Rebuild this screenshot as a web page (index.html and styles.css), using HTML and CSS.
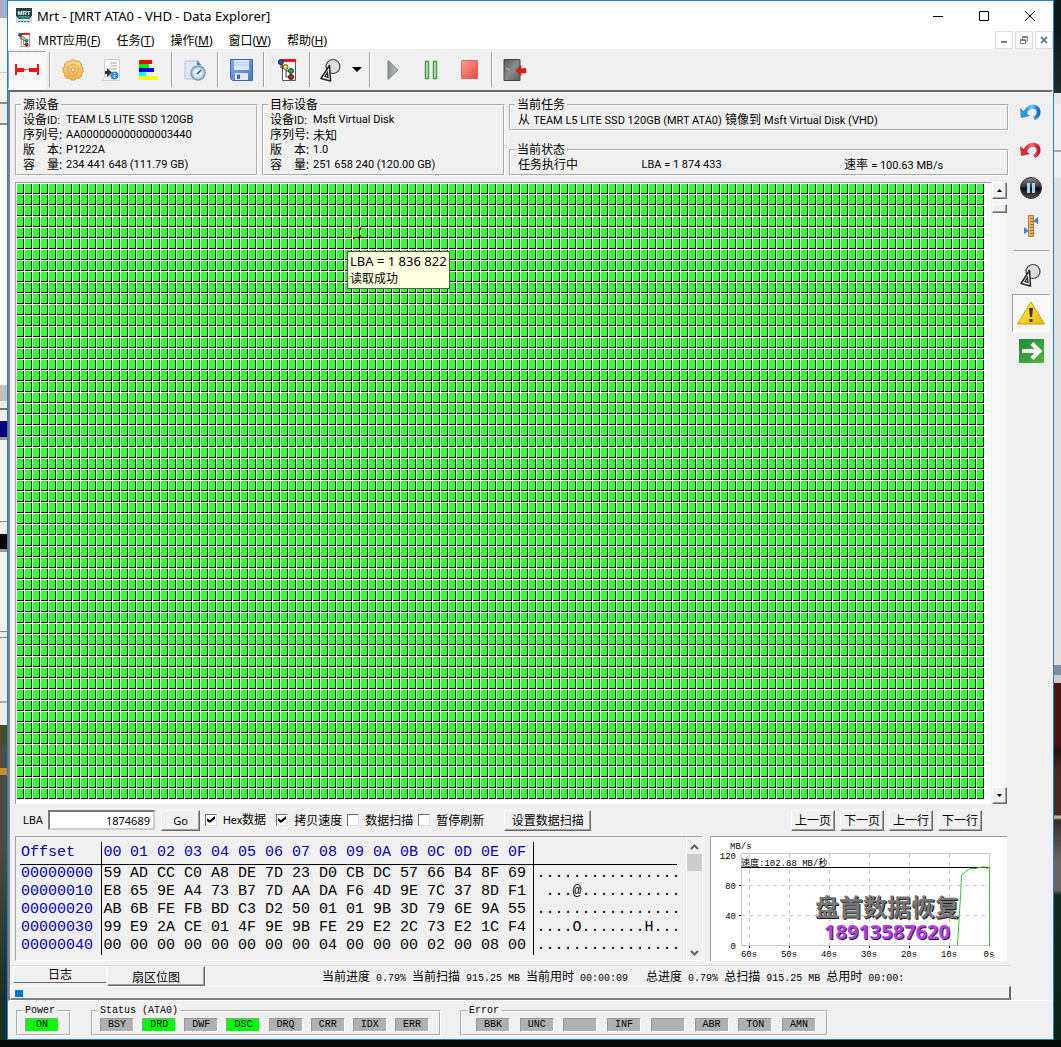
FILE: index.html
```html
<!DOCTYPE html>
<html lang="zh-CN">
<head>
<meta charset="utf-8">
<title>Mrt - [MRT ATA0 - VHD - Data Explorer]</title>
<link rel="stylesheet" href="styles.css">
</head>
<body>
<svg class="defs" width="0" height="0" aria-hidden="true">
  <defs>
    <linearGradient id="gGold" x1="0" y1="0" x2="0" y2="1"><stop offset="0" stop-color="#fbdc8c"/><stop offset="1" stop-color="#eeb04a"/></linearGradient>
    <linearGradient id="gBlue" x1="0" y1="0" x2="1" y2="1"><stop offset="0" stop-color="#86abe8"/><stop offset="1" stop-color="#4a78c8"/></linearGradient>
    <linearGradient id="gRed" x1="0" y1="0" x2="1" y2="1"><stop offset="0" stop-color="#ffa090"/><stop offset="1" stop-color="#e54440"/></linearGradient>
    <linearGradient id="gGrey" x1="0" y1="0" x2="1" y2="0"><stop offset="0" stop-color="#8b918b"/><stop offset="1" stop-color="#b8beb8"/></linearGradient>
    <linearGradient id="gDoor" x1="0" y1="0" x2="1" y2="1"><stop offset="0" stop-color="#555"/><stop offset=".5" stop-color="#8c8c8c"/><stop offset="1" stop-color="#5c5c5c"/></linearGradient>
    <linearGradient id="gUndo" x1="0" y1="0" x2="1" y2="0"><stop offset="0" stop-color="#2b9ae0"/><stop offset=".5" stop-color="#6cc4f4"/><stop offset="1" stop-color="#1670be"/></linearGradient>
    <linearGradient id="gRedo" x1="0" y1="0" x2="1" y2="0"><stop offset="0" stop-color="#d8263a"/><stop offset=".5" stop-color="#f06878"/><stop offset="1" stop-color="#c01c30"/></linearGradient>
    <linearGradient id="gBall" x1="0" y1="0" x2="0" y2="1"><stop offset="0" stop-color="#888"/><stop offset=".45" stop-color="#333"/><stop offset=".5" stop-color="#0a0a0a"/><stop offset="1" stop-color="#555"/></linearGradient>
    <linearGradient id="gWarn" x1="0" y1="0" x2="1" y2="1"><stop offset="0" stop-color="#fff04a"/><stop offset="1" stop-color="#eeb400"/></linearGradient>
    <linearGradient id="gGreen" x1="0" y1="0" x2="1" y2="1"><stop offset="0" stop-color="#1f8a3c"/><stop offset="1" stop-color="#4fb83a"/></linearGradient>
    <symbol id="shapes" viewBox="0 0 24 24">
      <circle cx="14" cy="8.500" r="7" fill="#dcdcdc" stroke="#444" stroke-width="1.200"/>
      <path d="M10.500 7.500 11.500 23 2 20.500Z" fill="#fff" stroke="#222" stroke-width="1.500" stroke-linejoin="round"/>
      <path d="M8.500 14.500 9 19.500 6 18.500Z" fill="#fff" stroke="#222" stroke-width="1.300"/>
    </symbol>
    <symbol id="tree" viewBox="0 0 18 22">
      <path d="M4.500.5H17.500V21.500H4.500Z" fill="#fff" stroke="#555"/>
      <path d="M5 0H18V3H5Z" fill="#e01818"/>
      <path d="M3 4V9H7M8 9V12H13M8 12V18H13" fill="none" stroke="#333"/>
      <circle cx="2.800" cy="3" r="2.500" fill="#2258b8" stroke="#123"/>
      <circle cx="7.500" cy="8" r="2.500" fill="#e8d838" stroke="#554"/>
      <circle cx="13" cy="12" r="2.500" fill="#28a848" stroke="#143"/>
      <circle cx="13" cy="18" r="2.500" fill="#c82020" stroke="#411"/>
    </symbol>
  </defs>
</svg>

<div class="desktop">
<div class="backdrop backdrop-left"></div>
<main class="window">
  <header class="titlebar">
    <svg width="16" height="16" viewBox="0 0 16 16"><path d="M0 0H16V8L13 11H3L0 8Z" fill="#21403f"/><path d="M0 9 3 11.500H13L16 9V15H0Z" fill="#c8dcd8"/><path d="M2 8 4 10.500H12L14 8Z" fill="#2f9a86"/><text x="8" y="6.500" text-anchor="middle" class="logo-text">MRT</text><path d="M2 13.500H14" stroke="#667" stroke-dasharray="2 1"/></svg>
    <h1>Mrt - [MRT ATA0 - VHD - Data Explorer]</h1>
    <div class="caption-buttons">
      <button aria-label="最小化"><svg width="12" height="12"><path d="M1 6.500H11" stroke="#000"/></svg></button>
      <button aria-label="最大化"><svg width="12" height="12"><path d="M1.500 1.500H10.500V10.500H1.500Z" fill="none" stroke="#000"/></svg></button>
      <button aria-label="关闭"><svg width="12" height="12"><path d="M1 1 11 11M11 1 1 11" stroke="#000"/></svg></button>
    </div>
  </header>

  <nav class="menubar">
    <svg width="12" height="14"><use href="#tree"/></svg>
    <a href="#">MRT应用(<u>F</u>)</a>
    <a href="#">任务(<u>T</u>)</a>
    <a href="#">操作(<u>M</u>)</a>
    <a href="#">窗口(<u>W</u>)</a>
    <a href="#">帮助(<u>H</u>)</a>
    <div class="mdi-buttons">
      <button aria-label="最小化子窗口"><svg width="8" height="8"><path d="M1 6H7" stroke="#6d7f92" stroke-width="2"/></svg></button>
      <button aria-label="还原子窗口"><svg width="8" height="8"><path d="M2.500 3V.5H7.500V5H6M2 1.500H8M.5 3.500H5.500V7.500H.5ZM0 4.500H6" fill="none" stroke="#6d7f92"/></svg></button>
      <button aria-label="关闭子窗口"><svg width="8" height="8"><path d="M1 1 7 7M7 1 1 7" stroke="#6d7f92" stroke-width="2"/></svg></button>
    </div>
  </nav>

  <div class="toolbar" role="toolbar">
    <button class="tool pressed" aria-label="连接"><svg width="24" height="12"><path d="M0 0H2V4L12 5.500 22 4V0H24V11H22V7L12 6 2 8V11H0ZM2 4H9V8H2ZM14 4H22V8H14Z" fill="#f01414"/></svg></button>
    <i class="sep"></i>
    <button class="tool" aria-label="设置"><svg width="22" height="22" viewBox="0 0 22 22"><path d="M9 1H13L14 3 17 2 19.500 5 19 7.500 21 9V13L19 14.500 19.500 17 17 19.500 14 19 13 21H9L8 19 5 19.500 2.500 17 3 14.500 1 13V9L3 7.500 2.500 5 5 2.500 8 3Z" fill="url(#gGold)" stroke="#d89a38"/><circle cx="11" cy="11" r="5.500" fill="none" stroke="#e0a648"/><circle cx="11" cy="11" r="2" fill="#fff" stroke="#c88a30"/></svg></button>
    <button class="tool" aria-label="任务信息"><svg width="20" height="22" viewBox="0 0 20 22"><path d="M3.500.5H18.500V21.500H1L3.500 18Z" fill="#fafafa" stroke="#d0d0d0"/><path d="M9 4H16M10 7H16M8 10H16M6 17H11" stroke="#aaa"/><path d="M4 12H6V9L11 13.500 6 18V15H4Z" fill="#333"/><circle cx="13.500" cy="16.500" r="4" fill="#2b8ae0"/><path d="M13.500 14V15M13.500 16V19" stroke="#fff" stroke-width="1.500"/></svg></button>
    <button class="tool" aria-label="颜色图例"><svg width="20" height="20" viewBox="0 0 20 20"><path d="M0 0H13V4H0Z" fill="#f00"/><path d="M0 4H10V8H0Z" fill="#0e0"/><path d="M0 8H15V12H0Z" fill="#00e"/><path d="M0 12H7V16H0Z" fill="#0ff"/><path d="M0 16H19V20H0Z" fill="#ff0"/></svg></button>
    <i class="sep"></i>
    <button class="tool" aria-label="定时"><svg width="22" height="22" viewBox="0 0 22 22"><path d="M1 2H13L17 6V20H1Z" fill="#dfe7f2" stroke="#b4c4dc"/><path d="M13 1 17 6H13Z" fill="#3c7cc0"/><circle cx="14" cy="14" r="7" fill="#a8d0ea" stroke="#8499ac" stroke-width="1.500"/><circle cx="14" cy="14" r="4.500" fill="#e8f6fc"/><path d="M13 15 17 11" stroke="#345" stroke-width="1.500"/></svg></button>
    <i class="sep"></i>
    <button class="tool" aria-label="保存"><svg width="23" height="22" viewBox="0 0 23 22"><path d="M.5.5H22.500V21.500H2.500L.5 19.500Z" fill="url(#gBlue)" stroke="#3c64b4"/><path d="M4 1H19V11H4Z" fill="#dce8fa"/><path d="M4 3.500H19M4 6H19" stroke="#b4ccee"/><path d="M5 14H18V21H5Z" fill="#e4e8f0"/><path d="M7 15.500H10V20H7Z" fill="#3c64b4"/></svg></button>
    <i class="sep"></i>
    <button class="tool" aria-label="任务树"><svg width="18" height="22"><use href="#tree"/></svg></button>
    <i class="sep"></i>
    <button class="tool shape" aria-label="图形"><svg width="24" height="24"><use href="#shapes"/></svg></button>
    <button class="tool drop" aria-label="更多"><svg width="10" height="5"><path d="M0 0H10L5 5Z"/></svg></button>
    <i class="sep"></i>
    <button class="tool" aria-label="开始"><svg width="12" height="22"><path d="M1 1.500 11 11 1 20.500Z" fill="url(#gGrey)" stroke="#7c837c"/></svg></button>
    <button class="tool" aria-label="暂停"><svg width="14" height="20"><path d="M1.500 1.500H4.500V18.500H1.500ZM9.500 1.500H12.500V18.500H9.500Z" fill="#cdeec4" stroke="#4a9c44" stroke-width="1.500"/></svg></button>
    <button class="tool" aria-label="停止"><svg width="17" height="19"><path d="M.5.5H16.500V18.500H.5Z" fill="url(#gRed)" stroke="#d86858"/></svg></button>
    <i class="sep"></i>
    <button class="tool" aria-label="退出"><svg width="24" height="22" viewBox="0 0 24 22"><path d="M1 .5H17V21.500H1Z" fill="url(#gDoor)" stroke="#444"/><path d="M3 9 6 11" stroke="#ccc"/><path d="M13 11.500 18 6.500V9.500H23V14H18V16.500Z" fill="#e01818" stroke="#b01010" stroke-width=".5"/></svg></button>
  </div>

  <div class="mdi">
    <div class="workspace">
      <section class="info">
        <fieldset class="device">
          <legend>源设备</legend>
          <dl>
            <div><dt>设备<span class="lat">ID:</span></dt><dd>TEAM L5 LITE SSD 120GB</dd></div>
            <div><dt>序列号:</dt><dd>AA000000000000003440</dd></div>
            <div><dt>版　本:</dt><dd>P1222A</dd></div>
            <div><dt>容　量:</dt><dd>234 441 648 (111.79 GB)</dd></div>
          </dl>
        </fieldset>
        <fieldset class="device">
          <legend>目标设备</legend>
          <dl>
            <div><dt>设备<span class="lat">ID:</span></dt><dd>Msft Virtual Disk</dd></div>
            <div><dt>序列号:</dt><dd class="han">未知</dd></div>
            <div><dt>版　本:</dt><dd>1.0</dd></div>
            <div><dt>容　量:</dt><dd>251 658 240 (120.00 GB)</dd></div>
          </dl>
        </fieldset>
        <div class="task">
          <fieldset>
            <legend>当前任务</legend>
            <p>从 <span class="lat">TEAM L5 LITE SSD 120GB (MRT ATA0)</span> 镜像到 <span class="lat">Msft Virtual Disk (VHD)</span></p>
          </fieldset>
          <fieldset>
            <legend>当前状态</legend>
            <p class="state"><span>任务执行中</span><span class="lat">LBA = 1 874 433</span><span>速率 <span class="lat">= 100.63 MB/s</span></span></p>
          </fieldset>
        </div>
      </section>

      <section class="map-row">
        <div class="map">
          <div class="cells"></div>
          <svg class="cursor" width="11" height="13" shape-rendering="crispEdges"><path d="M2 .5H4M7 .5H9M2 12.500H4M7 12.500H9M.5 1V4M9.500 1V4M.5 9V12M9.500 9V12" stroke="#f00"/></svg>
          <div class="tip"><span>LBA = 1 836 822</span><br>读取成功</div>
        </div>
        <div class="scroll">
          <button class="bevel" aria-label="向上"><svg width="5" height="3"><path d="M0 3H5L2.500 0Z"/></svg></button>
          <i class="bevel thumb"></i>
          <button class="bevel end" aria-label="向下"><svg width="5" height="3"><path d="M0 0H5L2.500 3Z"/></svg></button>
        </div>
      </section>

      <section class="controls">
        <label class="lat" for="lba">LBA</label>
        <input id="lba" class="lba" type="text" value="1874689">
        <button class="bevel go">Go</button>
        <label class="check"><input type="checkbox" checked><span><span class="lat">Hex</span>数据</span></label>
        <label class="check"><input type="checkbox" checked><span>拷贝速度</span></label>
        <label class="check"><input type="checkbox"><span>数据扫描</span></label>
        <label class="check"><input type="checkbox"><span>暂停刷新</span></label>
        <button class="bevel setup">设置数据扫描</button>
        <div class="pager">
          <button class="bevel">上一页</button>
          <button class="bevel">下一页</button>
          <button class="bevel">上一行</button>
          <button class="bevel">下一行</button>
        </div>
      </section>

      <section class="lower">
        <div class="hex">
          <table>
            <colgroup><col class="c-off"><col span="16" class="c-byte"><col class="c-text"></colgroup>
            <thead><tr><th>Offset</th><th>00</th><th>01</th><th>02</th><th>03</th><th>04</th><th>05</th><th>06</th><th>07</th><th>08</th><th>09</th><th>0A</th><th>0B</th><th>0C</th><th>0D</th><th>0E</th><th>0F</th><th></th></tr></thead>
            <tbody>
              <tr><th>00000000</th><td>59</td><td>AD</td><td>CC</td><td>C0</td><td>A8</td><td>DE</td><td>7D</td><td>23</td><td>D0</td><td>CB</td><td>DC</td><td>57</td><td>66</td><td>B4</td><td>8F</td><td>69</td><td>................</td></tr>
              <tr><th>00000010</th><td>E8</td><td>65</td><td>9E</td><td>A4</td><td>73</td><td>B7</td><td>7D</td><td>AA</td><td>DA</td><td>F6</td><td>4D</td><td>9E</td><td>7C</td><td>37</td><td>8D</td><td>F1</td><td> ...@...........</td></tr>
              <tr><th>00000020</th><td>AB</td><td>6B</td><td>FE</td><td>FB</td><td>BD</td><td>C3</td><td>D2</td><td>50</td><td>01</td><td>01</td><td>9B</td><td>3D</td><td>79</td><td>6E</td><td>9A</td><td>55</td><td>................</td></tr>
              <tr><th>00000030</th><td>99</td><td>E9</td><td>2A</td><td>CE</td><td>01</td><td>4F</td><td>9E</td><td>9B</td><td>FE</td><td>29</td><td>E2</td><td>2C</td><td>73</td><td>E2</td><td>1C</td><td>F4</td><td>....O.......H...</td></tr>
              <tr><th>00000040</th><td>00</td><td>00</td><td>00</td><td>00</td><td>00</td><td>00</td><td>00</td><td>00</td><td>04</td><td>00</td><td>00</td><td>00</td><td>02</td><td>00</td><td>08</td><td>00</td><td>................</td></tr>
            </tbody>
          </table>
          <div class="flat-scroll">
            <svg width="9" height="6"><path d="M1 5 4.500 1.500 8 5" fill="none" stroke="#606060" stroke-width="2"/></svg>
            <i></i>
            <svg class="end" width="9" height="6"><path d="M1 1 4.500 4.500 8 1" fill="none" stroke="#606060" stroke-width="2"/></svg>
          </div>
        </div>
        <div class="chart">
          <svg width="296" height="124" viewBox="0 0 296 124">
            <path d="M38.500 17V109M78.500 17V109M118.500 17V109M158.500 17V109M198.500 17V109M238.500 17V109M30 48.500H278M30 78.500H278" stroke="#c8c8c8" stroke-dasharray="4 4"/>
            <path d="M30.500 16.500H278.500V108.500H30.500Z" fill="none" stroke="#c8c8c8"/>
            <path d="M28 48.500H30M28 78.500H30M38.500 109V111M78.500 109V111M118.500 109V111M158.500 109V111M198.500 109V111M238.500 109V111" stroke="#000"/>
            <path d="M30 30.500H278" stroke="#000"/>
            <path d="M246.500 108 248.500 75 249.500 60 250.500 38 253 36 259 31.500H264L271 30H274L276 31.500 278.500 30V109" fill="none" stroke="#30c830"/>
            <g class="axis">
              <text x="19" y="12">MB/s</text>
              <text x="25" y="22" text-anchor="end">120</text><text x="25" y="52" text-anchor="end">80</text><text x="25" y="82" text-anchor="end">40</text><text x="25" y="112" text-anchor="end">0</text>
              <text x="38" y="120" text-anchor="middle">60s</text><text x="78" y="120" text-anchor="middle">50s</text><text x="118" y="120" text-anchor="middle">40s</text><text x="158" y="120" text-anchor="middle">30s</text><text x="198" y="120" text-anchor="middle">20s</text><text x="238" y="120" text-anchor="middle">10s</text><text x="278" y="120" text-anchor="middle">0s</text>
              <text x="30" y="29">速度:102.88 MB/秒</text>
            </g>
          </svg>
          <div class="watermark"><span>盘首数据恢复</span><strong>18913587620</strong></div>
        </div>
      </section>

      <section class="tabs">
        <button class="tab">日志</button>
        <button class="tab active">扇区位图</button>
        <p class="progress-text">当前进度<span> 0.79% </span>当前扫描<span> 915.25 MB </span>当前用时<span> 00:00:09</span></p>
        <p class="progress-text">总进度<span> 0.79% </span>总扫描<span> 915.25 MB </span>总用时<span> 00:00:</span></p>
      </section>
      <div class="bar" role="progressbar" aria-valuenow="1"><i style="width:0.79%"></i></div>
    </div>

    <aside class="side">
      <button class="tool" aria-label="撤销"><svg width="22" height="18" viewBox="0 0 22 18"><path d="M5 10C8 3 17 1 18.500 8 19 12 17 14 14 15.500" fill="none" stroke="url(#gUndo)" stroke-width="4"/><path d="M0 5 1 15 10 13Z" fill="#2b94dc"/></svg></button>
      <button class="tool" aria-label="重做"><svg width="22" height="18" viewBox="0 0 22 18"><path d="M5 10C8 3 17 1 18.500 8 19 12 17 14 14 15.500" fill="none" stroke="url(#gRedo)" stroke-width="4"/><path d="M0 5 1 15 10 13Z" fill="#d42c40"/></svg></button>
      <button class="tool" aria-label="暂停任务"><svg width="22" height="22"><circle cx="11" cy="11" r="10.500" fill="url(#gBall)" stroke="#333"/><path d="M7 6H10V16H7ZM12 6H15V16H12Z" fill="#9cd4fa"/></svg></button>
      <button class="tool" aria-label="标尺"><svg width="14" height="22" viewBox="0 0 14 22"><path d="M4.500.5H9.500V21.500H4.500Z" fill="#e8b468" stroke="#b47c30"/><path d="M6 3.500H9M6 6.500H9M6 9.500H9M6 12.500H9M6 15.500H9M6 18.500H9" stroke="#a06820"/><path d="M9 6 14 2V9Z M5 16 0 12V19Z" fill="#2b8adc"/></svg></button>
      <i class="rule"></i>
      <button class="tool" aria-label="图形工具"><svg width="24" height="24"><use href="#shapes"/></svg></button>
      <button class="tool pressed" aria-label="警告"><svg width="28" height="24" viewBox="0 0 28 24"><path d="M14 1 27.500 23H.5Z" fill="url(#gWarn)" stroke="#c89a10" stroke-linejoin="round"/><path d="M12 7H16L15 16H13ZM12.500 18H15.500V21H12.500Z" fill="#333"/></svg></button>
      <button class="tool" aria-label="前进"><svg width="25" height="24"><path d="M0 0H25V24H0Z" fill="url(#gGreen)"/><path d="M3 12H20M13 4.500 20.500 12 13 19.500" fill="none" stroke="#fff" stroke-width="4"/></svg></button>
    </aside>
  </div>

  <footer class="leds">
    <fieldset class="power"><legend>Power</legend><b class="on">ON</b></fieldset>
    <fieldset class="status"><legend>Status (ATA0)</legend><b>BSY</b><b class="on">DRD</b><b>DWF</b><b class="on">DSC</b><b>DRQ</b><b>CRR</b><b>IDX</b><b>ERR</b></fieldset>
    <fieldset class="error"><legend>Error</legend><b>BBK</b><b>UNC</b><b></b><b>INF</b><b></b><b>ABR</b><b>TON</b><b>AMN</b></fieldset>
  </footer>
</main>
<div class="backdrop backdrop-right"></div>
</div>
</body>
</html>
```
FILE: styles.css
```css
* { box-sizing: border-box; }
body {
  margin: 0;
  background: #060a08;
  color: #000;
  font: 12px/15px "Noto Sans", "Noto Sans CJK SC", sans-serif;
}
h1, p, dl, dd { margin: 0; }
button { padding: 0; border: 0; background: none; font: inherit; color: inherit; }
fieldset { margin: 0; padding: 0; min-width: 0; border: 2px groove #fff; }
legend { margin-left: 4px; padding: 0 2px; font-size: 12px; line-height: 15px; }
svg { display: block; flex: none; }
.defs { position: absolute; }

.desktop { display: grid; grid-template-columns: 7px 1fr 7px; height: 100vh; min-height: 800px; padding-bottom: 7px; }
.backdrop-left {
  background: linear-gradient(#a6adc4 0 18px, #f4f4f4 18px 72px, #ccc 72px 73px, #f4f4f4 73px 102px, #888 102px 104px, #eee 104px 123px, #888 123px 125px,
    #fff 125px 385px, #c0c0c0 385px 401px, #eee 401px 408px, #777 408px 410px, #eee 410px 421px, #000078 421px 437px, #999 437px 440px,
    #f2f2f2 440px 521px, #888 521px 522px, #eee 522px 534px, #000 534px 549px, #999 549px 552px, #f2f2f2 552px 631px, #888 631px 632px,
    #eee 632px 637px, #888 637px 638px, #eee 638px 701px, #aaa 701px 703px, #eee 703px 725px, #4a4c28 725px 745px, #504e48 745px 768px, #c8902c 768px 775px, #4d4e42 775px 830px, #3c4a38 880px, #16302a 1000px);
}
.backdrop-right {
  background: linear-gradient(#0e1a1a 0 30px, #1c2c28 93px, #e8e8e8 93px 104px, #eee 104px 150px, #aaa 150px 152px, #eee 152px 178px, #e0e0e0 178px 665px,
    #7e8ea0 665px 675px, #ccc 675px 683px, #4a1410 683px 745px, #20140f 750px, #4a2820 770px 815px, #c0b0a0 816px 818px, #3a2c28 820px, #6a6464 860px 890px, #142c20 895px, #0c2418);
}

.window { display: flex; flex-direction: column; min-width: 0; background: #f0f0f0; border: 1px solid #1c80d4; }
.titlebar { display: flex; align-items: center; height: 30px; padding-left: 8px; background: #fff; }
.titlebar h1 { margin-left: 5px; font-size: 13px; font-weight: 400; }
.logo-text { font: bold 6px "Liberation Sans", sans-serif; fill: #fff; }
.caption-buttons { display: flex; margin-left: auto; }
.caption-buttons button { display: grid; place-items: center; width: 46px; height: 29px; }
.menubar { display: flex; align-items: center; gap: 16px; height: 18px; padding-left: 10px; background: #fff; }
.menubar > svg { margin-right: -8px; }
.menubar a { color: #000; text-decoration: none; }
.mdi-buttons { display: flex; gap: 2px; margin-left: auto; }
.mdi-buttons button { display: grid; place-items: center; width: 18px; height: 18px; border: 1px solid #ddd; }

.toolbar { display: flex; align-items: center; height: 41px; }
.tool { display: grid; place-items: center; flex: none; width: 38px; height: 38px; }
.tool.shape { width: 34px; }
.tool.drop { width: 18px; }
.tool.pressed {
  border: 1px solid; border-color: #a0a0a0 #fff #fff #a0a0a0;
  background: repeating-conic-gradient(#f0f0f0 0 25%, #fff 0 50%) 0 0 / 2px 2px;
}
.sep { width: 2px; height: 35px; margin: 0 3px; border-left: 1px solid #a0a0a0; background: #fff; }

.mdi { display: flex; flex: 1; min-height: 0; border: solid; border-width: 2px 2px 1px; border-color: #696969 #f0f0f0 #fff #808080; }
.workspace { display: flex; flex-direction: column; flex: 1; min-width: 0; }
.side { width: 40px; padding: 1px 0 0 1px; }
.rule { display: block; width: 35px; height: 6px; margin: 5px 0 0 2px; border-top: 1px solid #a0a0a0; }

.info { display: flex; gap: 4px; padding: 5px 2px 6px 5px; }
.device { width: 243px; }
.device dl { padding-left: 6px; padding-bottom: 2px; }
.device dl div { display: flex; gap: 2px; height: 15px; }
dt { flex: none; width: 41px; white-space: nowrap; }
dd, .lat { font-family: Roboto, "Noto Sans", sans-serif; font-size: 11px; line-height: 15px; }
dd.han { font-family: "Noto Sans CJK SC", sans-serif; font-size: 12px; }
.task { flex: 1; display: flex; flex-direction: column; gap: 11px; }
.task p { height: 17px; padding-left: 7px; white-space: nowrap; }
.task .state { display: grid; grid-template-columns: 25fr 41fr 33fr; }

.map-row { display: flex; flex: 1; min-height: 0; gap: 1px; padding: 0 4px 0 5px; }
.map { position: relative; flex: 1; padding: 1px; background: #fff; border: solid #a0a0a0; border-width: 1px 0 0 1px; }
.cells {
  width: round(down, 100%, 8px);
  height: round(down, 100%, 11px);
  background:
    linear-gradient(90deg, transparent 7px, #fff 7px) 0 0 / 8px 11px,
    linear-gradient(transparent 10px, #fff 10px) 0 0 / 8px 11px,
    linear-gradient(90deg, transparent 6px, #000 6px) 0 0 / 8px 11px,
    linear-gradient(#32ff32 9px, #000 9px) 0 0 / 8px 11px;
}
.cursor { position: absolute; left: 335px; top: 43px; }
.tip { position: absolute; left: 331px; top: 68px; padding: 1px 2px; border: 1px solid #555; background: #ffffe1; line-height: 17px; white-space: nowrap; }
.tip span { font-size: 13px; }
.scroll { display: flex; flex-direction: column; width: 15px; background: repeating-conic-gradient(#f0f0f0 0 25%, #fff 0 50%) 0 0 / 2px 2px; }
.bevel { display: grid; place-items: center; flex: none; background: #f0f0f0; border: 1px solid; border-color: #fff #696969 #696969 #fff; box-shadow: inset -1px -1px #a0a0a0; }
.scroll .bevel { width: 15px; height: 17px; }
.scroll .thumb { height: 9px; margin-top: 5px; }
.scroll .end { margin-top: auto; }

.controls { display: flex; align-items: center; height: 32px; padding: 0 29px 0 13px; }
.lba { width: 107px; height: 20px; margin: 0 6px 0 5px; padding: 0 3px; border: 2px inset #ccc; background: #fff; font: inherit; font-size: 11px; text-align: right; }
.controls .bevel { height: 21px; white-space: nowrap; }
.go { width: 39px; margin-right: 5px; font-size: 11px; }
.check { display: flex; align-items: center; gap: 6px; margin-right: 5px; white-space: nowrap; }
.go + .check { margin-right: 10px; }
.check input {
  appearance: none; width: 12px; height: 12px; margin: 0; background: #fff;
  border: 1px solid; border-color: #696969 #ddd #ddd #696969;
}
.check input:checked::before {
  content: ""; display: block; width: 8px; height: 7px; margin: 1px; background: #000;
  clip-path: polygon(0 30%, 35% 60%, 100% 0, 100% 40%, 35% 100%, 0 70%);
}
.setup { width: 87px; margin-left: 15px; }
.pager { display: flex; gap: 5px; margin-left: auto; }
.pager .bevel { width: 44px; }

.lower { display: flex; gap: 7px; padding: 0 4px 0 5px; }
.hex { display: flex; flex: 1; justify-content: space-between; min-width: 0; height: 125px; padding: 5px 0 0 4px; border: 1px solid; border-color: #a0a0a0 #fff #fff #a0a0a0; font: 15px/18px "Liberation Mono", monospace; }
.hex table { table-layout: fixed; width: 657px; height: 113px; border-collapse: collapse; }
.hex td, .hex th { padding: 0 0 0 2px; height: 18px; text-align: left; font-weight: 400; white-space: pre; }
.hex th { padding-left: 1px; color: #0000b0; }
.hex thead th { height: 22px; border-bottom: 1px solid #000; }
.hex thead th + th { padding-left: 2px; }
.hex tr > :first-child { border-right: 1px solid #000; }
.hex tr > :last-child { border-left: 1px solid #000; padding-left: 3px; }
.c-off { width: 81px; }
.c-byte { width: 27px; }
.flat-scroll { display: flex; flex-direction: column; align-items: center; width: 16px; margin-top: -5px; padding: 7px 0 4px; border-left: 1px solid #fff; }
.flat-scroll i { width: 15px; height: 17px; margin-top: 4px; background: #cdcdcd; }
.flat-scroll .end { margin-top: auto; }
.chart { position: relative; flex: none; width: 297px; height: 125px; background: #fff; border: solid #a0a0a0; border-width: 1px 0 0 1px; }
.axis { font: 9px "Liberation Mono", "Noto Sans CJK SC", monospace; }
.watermark { position: absolute; left: 104px; top: 55px; display: grid; justify-items: center; white-space: nowrap; }
.watermark span { font: bold 24px/28px "Noto Sans CJK SC", sans-serif; color: #777; text-shadow: 1px 1px #222; }
.watermark strong { font: bold 20px/24px "Noto Sans", sans-serif; color: #b83cf0; text-shadow: 1px 1px #222; }

.tabs { display: flex; align-items: flex-start; height: 21px; margin-top: 4px; padding-left: 3px; border-top: 1px solid #ddd; }
.tab { flex: none; width: 94px; height: 17px; border: 1px solid; border-color: #fff #fff #696969; }
.tab.active { width: 98px; height: 20px; padding-top: 2px; border-color: #f0f0f0 #696969 #696969 #fff; box-shadow: inset -1px -1px #a0a0a0; }
.progress-text { margin: 3px 0 0 18px; white-space: nowrap; }
.tab + .progress-text { margin-left: 117px; }
.progress-text span { font: 10px/15px "Liberation Mono", monospace; white-space: pre; }
.bar { height: 14px; padding: 3px 4px; border: solid; border-width: 1px 2px 2px 1px; border-color: #fff #696969 #808080 #fff; }
.bar i { display: block; height: 7px; background: #0078d7; }

.leds { display: flex; height: 38px; padding: 2px 0 3px 8px; }
.leds fieldset { display: flex; justify-content: space-between; height: 33px; padding: 0 10px 0 7px; }
.leds legend { margin-left: -2px; font: 10px/15px "Liberation Mono", monospace; }
.leds b { width: 34px; height: 14px; background: #b0b0b0; border: 1px solid; border-color: #999 #fff #fff #999; font: 10px/12px "Liberation Mono", monospace; text-align: center; }
.leds .on { background: #0f0; }
.power { width: 55px; }
.status { width: 350px; margin-left: 20px; }
.error { width: 368px; margin-left: 19px; }
.leds .error { padding-left: 14px; }
.leds .error legend { margin-left: -9px; }
```
